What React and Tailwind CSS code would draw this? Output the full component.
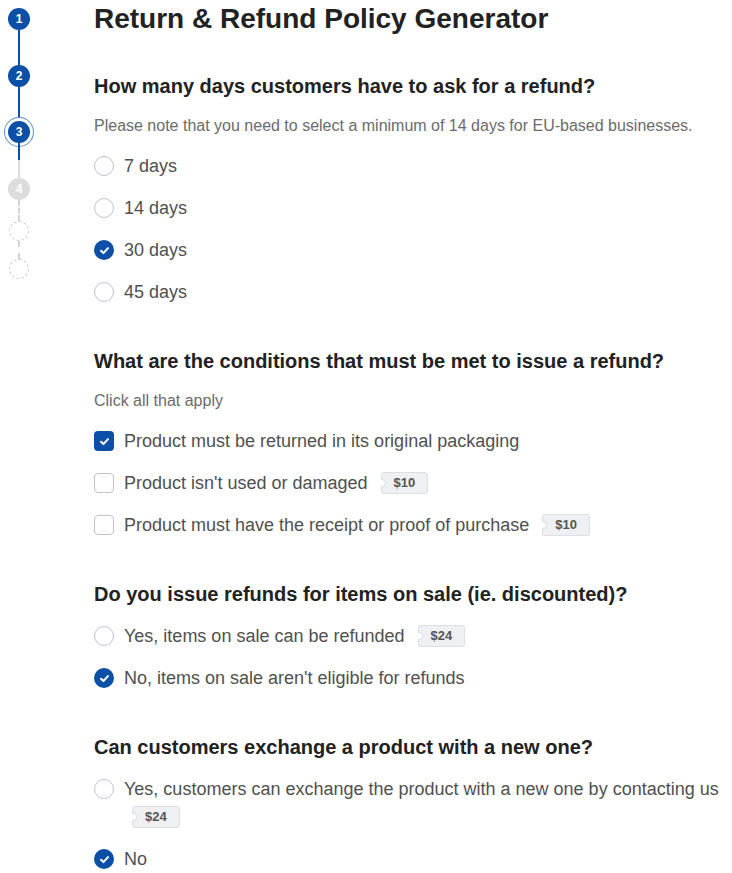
import React, { useState } from 'react';

const BLUE = 'bg-[#0b4fa6]';

const Check = () => (
  <svg viewBox="0 0 12 12" className="w-[11px] h-[11px]" fill="none">
    <path d="M2.2 6.3 L4.8 8.8 L9.8 3.4" stroke="white" strokeWidth="2.2" strokeLinecap="round" strokeLinejoin="round" />
  </svg>
);

const Badge = ({ price }) => (
  <span className="relative inline-flex items-center align-middle h-[22px] px-[12px] ml-2 -mt-[3px] rounded-[3px] border border-[#dcdfe3] bg-[#eef0f3] text-[13px] font-bold leading-none text-[#555]">
    <span className="absolute -left-px top-1/2 -translate-y-1/2 w-[5px] h-[8px] bg-white border border-l-0 border-[#dcdfe3] rounded-r-full" />
    {price}
  </span>
);

const Option = ({ type, checked, label, price, onClick }) => (
  <div className="flex items-start gap-[10px] cursor-pointer" onClick={onClick}>
    {type === 'radio' ? (
      checked ? (
        <span className={`mt-[4px] shrink-0 w-[20px] h-[20px] rounded-full ${BLUE} flex items-center justify-center`}>
          <Check />
        </span>
      ) : (
        <span className="mt-[4px] shrink-0 w-[20px] h-[20px] rounded-full border border-[#bfc4ca] bg-white" />
      )
    ) : checked ? (
      <span className={`mt-[4px] shrink-0 w-[20px] h-[20px] rounded-[4px] ${BLUE} flex items-center justify-center`}>
        <Check />
      </span>
    ) : (
      <span className="mt-[4px] shrink-0 w-[20px] h-[20px] rounded-[4px] border border-[#bfc4ca] bg-white" />
    )}
    <span className="text-[18px] leading-[28px] text-[#505050]">
      {label}
      {price && <> <Badge price={price} /></>}
    </span>
  </div>
);

const Question = ({ title, note, children }) => (
  <section className="mt-[41px]">
    <h2 className="text-[20px] leading-[28px] font-bold text-[#222] mb-[14px]">{title}</h2>
    {note && <p className="text-[16px] leading-[24px] text-[#6b6b6b] mb-[14px]">{note}</p>}
    <div className="flex flex-col gap-[14px]">{children}</div>
  </section>
);

const Stepper = () => (
  <div className="w-[38px] flex flex-col items-center pt-[8px]">
    <span className={`w-[22px] h-[22px] rounded-full ${BLUE} text-white text-[12px] font-bold flex items-center justify-center`}>1</span>
    <span className={`w-[2px] h-[35px] ${BLUE}`} />
    <span className={`w-[22px] h-[22px] rounded-full ${BLUE} text-white text-[12px] font-bold flex items-center justify-center`}>2</span>
    <span className={`w-[2px] h-[34px] ${BLUE}`} />
    <span className={`w-[22px] h-[22px] rounded-full ${BLUE} text-white text-[12px] font-bold flex items-center justify-center ring-1 ring-[#5b8fd6] ring-offset-[3px] ring-offset-white`}>3</span>
    <span className={`w-[2px] h-[17px] ${BLUE}`} />
    <span className="w-[2px] h-[18px] bg-[#dcdcdc]" />
    <span className="w-[22px] h-[22px] rounded-full bg-[#dcdcdc] text-white text-[12px] font-bold flex items-center justify-center">4</span>
    <span className="h-[21px] border-l-2 border-dashed border-[#d4d4d4]" />
    <span className="w-[20px] h-[20px] rounded-full border border-dashed border-[#c8c8c8]" />
    <span className="h-[18px] border-l-2 border-dashed border-[#d4d4d4]" />
    <span className="w-[20px] h-[20px] rounded-full border border-dashed border-[#c8c8c8]" />
  </div>
);

export default function App() {
  const [days, setDays] = useState('30');
  const [conds, setConds] = useState({ packaging: true, used: false, receipt: false });
  const [sale, setSale] = useState('no');
  const [exchange, setExchange] = useState('no');

  const toggle = (k) => setConds((c) => ({ ...c, [k]: !c[k] }));

  return (
    <div className="min-h-screen bg-white flex font-['Liberation_Sans',Arial,sans-serif]">
      <Stepper />
      <main className="flex-1 pl-[56px] pr-[12px] pb-8">
        <h1 className="mt-[2px] text-[28px] leading-[34px] font-bold text-[#222] mb-[-5px]">Return &amp; Refund Policy Generator</h1>

        <Question
          title="How many days customers have to ask for a refund?"
          note="Please note that you need to select a minimum of 14 days for EU-based businesses."
        >
          {['7', '14', '30', '45'].map((d) => (
            <Option key={d} type="radio" checked={days === d} label={`${d} days`} onClick={() => setDays(d)} />
          ))}
        </Question>

        <Question title="What are the conditions that must be met to issue a refund?" note="Click all that apply">
          <Option type="checkbox" checked={conds.packaging} label="Product must be returned in its original packaging" onClick={() => toggle('packaging')} />
          <Option type="checkbox" checked={conds.used} label="Product isn't used or damaged" price="$10" onClick={() => toggle('used')} />
          <Option type="checkbox" checked={conds.receipt} label="Product must have the receipt or proof of purchase" price="$10" onClick={() => toggle('receipt')} />
        </Question>

        <Question title="Do you issue refunds for items on sale (ie. discounted)?">
          <Option type="radio" checked={sale === 'yes'} label="Yes, items on sale can be refunded" price="$24" onClick={() => setSale('yes')} />
          <Option type="radio" checked={sale === 'no'} label="No, items on sale aren't eligible for refunds" onClick={() => setSale('no')} />
        </Question>

        <Question title="Can customers exchange a product with a new one?">
          <Option type="radio" checked={exchange === 'yes'} label="Yes, customers can exchange the product with a new one by contacting us" price="$24" onClick={() => setExchange('yes')} />
          <Option type="radio" checked={exchange === 'no'} label="No" onClick={() => setExchange('no')} />
        </Question>
      </main>
    </div>
  );
}
